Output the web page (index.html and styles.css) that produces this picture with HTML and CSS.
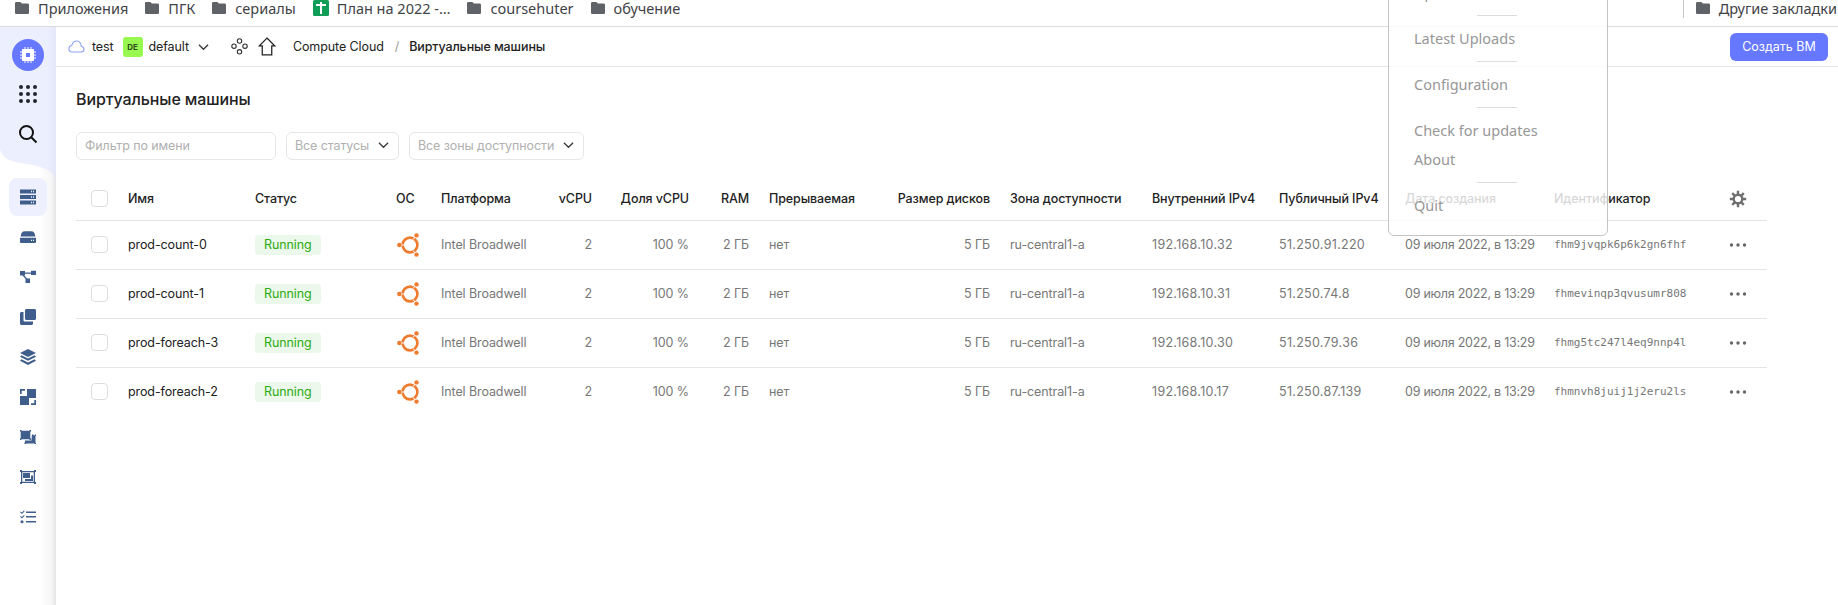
FILE: index.html
```html
<!DOCTYPE html>
<html lang="ru">
<head>
    <meta charset="UTF-8">
    <title>Виртуальные машины</title>
    <link rel="stylesheet" href="styles.css">
</head>
<body>
    <svg class="defs" width="0" height="0">
        <symbol id="folder" viewBox="0 0 14 12"><path d="M1.3 0H5.4L6.8 1.6H12.7C13.4 1.6 14 2.2 14 2.9V10.7C14 11.4 13.4 12 12.7 12H1.3C.6 12 0 11.4 0 10.7V1.3C0 .6 .6 0 1.3 0Z"/></symbol>
        <symbol id="chevron" viewBox="0 0 12 8"><path d="M1 1.5L6 6.5L11 1.5" fill="none" stroke="currentColor" stroke-width="1.3"/></symbol>
        <symbol id="dots" viewBox="0 0 18 4"><circle cx="2.500" cy="2" r="1.700"/><circle cx="9" cy="2" r="1.700"/><circle cx="15.500" cy="2" r="1.700"/></symbol>
        <symbol id="ubuntu" viewBox="0 0 24 24">
            <circle cx="14" cy="12" r="7.400" fill="none" stroke="#ee7b2e" stroke-width="2.600"/>
            <path d="M5 12H8.500M17.200 6.500L18.800 4M17.200 17.500L18.800 20" stroke="#fff" stroke-width="1"/>
            <circle cx="3.300" cy="12" r="2.200" fill="#ee7b2e"/>
            <circle cx="20.500" cy="2.400" r="2.200" fill="#ee7b2e"/>
            <circle cx="20.500" cy="21.600" r="2.200" fill="#ee7b2e"/>
        </symbol>
    </svg>

    <div class="bookmarks">
        <span class="bm"><svg class="bm-icon"><use href="#folder"/></svg>Приложения</span>
        <span class="bm"><svg class="bm-icon"><use href="#folder"/></svg>ПГК</span>
        <span class="bm"><svg class="bm-icon"><use href="#folder"/></svg>сериалы</span>
        <span class="bm"><svg class="bm-sheet" viewBox="0 0 16 16"><rect width="16" height="16" rx="1.5" fill="#0f9d58"/><path d="M3 5H13M8 2V14" stroke="#fff" stroke-width="2"/></svg>План на 2022 -…</span>
        <span class="bm"><svg class="bm-icon"><use href="#folder"/></svg>coursehuter</span>
        <span class="bm"><svg class="bm-icon"><use href="#folder"/></svg>обучение</span>
        <span class="bm bm-other"><svg class="bm-icon"><use href="#folder"/></svg>Другие закладки</span>
    </div>

    <div class="app">
        <aside class="sidebar">
            <div class="side-top">
                <span class="logo">
                    <svg width="18" height="18" viewBox="0 0 18 18"><path fill="#fff" fill-rule="evenodd" d="M4 3H14C14.600 3 15 3.400 15 4V14C15 14.600 14.600 15 14 15H4C3.400 15 3 14.600 3 14V4C3 3.400 3.400 3 4 3ZM7 7V11H11V7Z"/><path d="M6 1V3M9 1V3M12 1V3M6 15V17M9 15V17M12 15V17M1 6H3M1 9H3M1 12H3M15 6H17M15 9H17M15 12H17" stroke="#fff"/></svg>
                </span>
                <span class="side-btn">
                    <svg width="18" height="18" viewBox="0 0 18 18" fill="#22262e"><circle cx="2" cy="2" r="2"/><circle cx="9" cy="2" r="2"/><circle cx="16" cy="2" r="2"/><circle cx="2" cy="9" r="2"/><circle cx="9" cy="9" r="2"/><circle cx="16" cy="9" r="2"/><circle cx="2" cy="16" r="2"/><circle cx="9" cy="16" r="2"/><circle cx="16" cy="16" r="2"/></svg>
                </span>
                <span class="side-btn">
                    <svg width="20" height="20" viewBox="0 0 20 20" fill="none" stroke="#111" stroke-width="2"><circle cx="8.500" cy="8.500" r="6.500"/><path d="M13 13L18.500 18.500"/></svg>
                </span>
            </div>
            <nav class="side-nav">
                <span class="nav-item active">
                    <svg viewBox="0 0 16 16"><path fill-rule="evenodd" d="M0 .5H16V4.500H0ZM0 6H16V10H0ZM0 11.500H16V15.500H0ZM11 1.800V3.200H12V1.800ZM13 1.800V3.200H14V1.800ZM11 7.300V8.700H12V7.300ZM13 7.300V8.700H14V7.300ZM11 12.800V14.200H12V12.800ZM13 12.800V14.200H14V12.800Z"/></svg>
                </span>
                <span class="nav-item">
                    <svg viewBox="0 0 16 12"><path fill-rule="evenodd" d="M3 .5C4.500 0 11.500 0 13 .5C14.200 1 15 3 15.300 5.500H.7C1 3 1.800 1 3 .5ZM.5 6.800H15.500C16 6.800 16 7.300 16 7.800V10.500C16 11.500 15.500 12 14.500 12H1.500C.5 12 0 11.500 0 10.500V7.800C0 7.300 0 6.800 .5 6.800ZM11 8.800V10H12V8.800ZM13 8.800V10H14V8.800Z"/></svg>
                </span>
                <span class="nav-item">
                    <svg viewBox="0 0 16 14"><path d="M0 1H5V5.500H0ZM11 .8H16V5H11ZM5.500 8.500H10V13H5.500Z"/><path d="M4 3.200H12M3 5L7 9.500" stroke="#3f5e8c" stroke-width="1.200"/></svg>
                </span>
                <span class="nav-item">
                    <svg viewBox="0 0 16 16"><path d="M5 1.500C5 .7 5.700 0 6.500 0H14.500C15.300 0 16 .7 16 1.500V9.500C16 10.300 15.300 11 14.500 11H6.500C5.700 11 5 10.300 5 9.500Z"/><path d="M3.500 3V11.500C3.500 12 4 12.500 4.500 12.500H13V14.500C13 15.300 12.300 16 11.500 16H1.500C.7 16 0 15.300 0 14.500V4.500C0 3.700 .7 3 1.500 3Z"/></svg>
                </span>
                <span class="nav-item">
                    <svg viewBox="0 0 16 16"><path d="M8 0L16 4L8 8L0 4ZM1.500 6.300L8 9.600L14.500 6.300L16 7.800L8 11.800L0 7.800ZM1.500 10.300L8 13.500L14.500 10.300L16 11.800L8 16L0 11.800Z"/></svg>
                </span>
                <span class="nav-item">
                    <svg viewBox="0 0 16 16"><path d="M0 0H5V1.700H1.700V5H0ZM7 0H16V9H7ZM0 7H9V16H0ZM14.300 11H16V16H11V14.300H14.300Z"/></svg>
                </span>
                <span class="nav-item">
                    <svg viewBox="0 0 16 14"><path d="M0 0H1.500V.8H9.500V0H11V1.500H10.300V8.500H11V10H9.500V9.300H1.500V10H0V8.500H.7V1.500H0Z"/><path d="M12 4.500H13.500V5.200H15V4.500H16V6H15.500V13H16V14H14.500V13.500H6V14H4.500V12.500H5V10.500H11.500V9Z"/></svg>
                </span>
                <span class="nav-item">
                    <svg viewBox="0 0 16 14"><path fill-rule="evenodd" d="M0 0H2V1H14V0H16V2H15V12H16V14H14V13H2V14H0V12H1V2H0ZM2.300 2.300V11.700H13.700V2.300ZM3 3H10V8H3ZM11 5.500H13V11H5V9H11Z"/></svg>
                </span>
                <span class="nav-item">
                    <svg viewBox="0 0 16 13"><path d="M6 1H16V2.600H6ZM6 5.500H16V7.100H6ZM6 10.500H16V12.100H6Z"/><path d="M.5 1.300L2 2.800L4.300 .4M.5 5.800L2 7.300L4.300 4.900" fill="none" stroke="#3f5e8c" stroke-width="1.100"/><circle cx="2" cy="11.300" r="1.500"/></svg>
                </span>
            </nav>
        </aside>

        <main class="content">
            <header class="topbar">
                <svg class="cloud" width="17" height="13" viewBox="0 0 17 13" fill="none" stroke="#8ea4f0" stroke-width="1.100"><path d="M4 12H13C15 12 16 10.800 16 9.300C16 7.800 15 6.600 13.300 6.500C13 3.300 11 1 8.500 1C6 1 4.500 2.800 4 5.200C2.200 5.500 1 7 1 8.700C1 10.600 2.300 12 4 12Z"/></svg>
                <span class="cloud-name">test</span>
                <span class="folder-badge">DE</span>
                <span class="folder-name">default</span>
                <svg class="chev-sm"><use href="#chevron"/></svg>
                <svg class="nodes" width="17" height="17" viewBox="0 0 17 17" fill="none" stroke="#333" stroke-width="1.100"><circle cx="8.500" cy="3" r="2.200"/><circle cx="3" cy="8.200" r="2.200"/><circle cx="14" cy="8.200" r="2.200"/><circle cx="8.500" cy="13.800" r="2.200"/></svg>
                <svg class="home" width="18" height="19" viewBox="0 0 17 18" fill="none" stroke="#222" stroke-width="1.200"><path d="M8.500 1L16 8.500H13V17H4V8.500H1Z"/></svg>
                <span class="crumb">Compute Cloud</span>
                <span class="crumb-sep">/</span>
                <span class="crumb-current">Виртуальные машины</span>
                <button class="create-btn">Создать ВМ</button>
            </header>

            <section class="page">
                <h1 class="title">Виртуальные машины</h1>
                <div class="filters">
                    <span class="filter filter-name">Фильтр по имени</span>
                    <span class="filter filter-status">Все статусы<svg class="chev-sm"><use href="#chevron"/></svg></span>
                    <span class="filter filter-zone">Все зоны доступности<svg class="chev-sm"><use href="#chevron"/></svg></span>
                </div>

                <table class="vm-table">
                    <colgroup>
                        <col class="c-check"><col class="c-name"><col class="c-status"><col class="c-os">
                        <col class="c-platform"><col class="c-vcpu"><col class="c-share"><col class="c-ram">
                        <col class="c-preempt"><col class="c-disk"><col class="c-zone"><col class="c-ip">
                        <col class="c-pub"><col class="c-date"><col class="c-id"><col class="c-menu">
                    </colgroup>
                    <thead>
                        <tr>
                            <th class="pick"><span class="check"></span></th>
                            <th>Имя</th><th>Статус</th><th>ОС</th><th>Платформа</th>
                            <th class="num">vCPU</th><th class="num">Доля vCPU</th><th class="num">RAM</th>
                            <th>Прерываемая</th><th class="num">Размер дисков</th><th>Зона доступности</th>
                            <th>Внутренний IPv4</th><th>Публичный IPv4</th><th>Дата создания</th><th>Идентификатор</th>
                            <th class="menu">
                                <svg class="gear" width="18" height="18" viewBox="0 0 18 18" fill="none" stroke="#6f6f6f"><circle cx="9" cy="9" r="4.300" stroke-width="2.400"/><path d="M9 .8V4M9 14V17.200M.8 9H4M14 9H17.200M3.200 3.200L5.400 5.400M12.600 12.600L14.800 14.800M3.200 14.800L5.400 12.600M12.600 5.400L14.800 3.200" stroke-width="2.400"/></svg>
                            </th>
                        </tr>
                    </thead>
                    <tbody>
                        <tr>
                            <td class="pick"><span class="check"></span></td>
                            <td class="name">prod-count-0</td><td><span class="status">Running</span></td>
                            <td><svg class="os"><use href="#ubuntu"/></svg></td><td>Intel Broadwell</td>
                            <td class="num">2</td><td class="num">100 %</td><td class="num">2 ГБ</td><td>нет</td><td class="num">5 ГБ</td>
                            <td>ru-central1-a</td><td class="ip">192.168.10.32</td><td class="ip">51.250.91.220</td><td class="date">09 июля 2022, в 13:29</td>
                            <td class="mono">fhm9jvqpk6p6k2gn6fhf</td><td class="menu"><svg class="dots"><use href="#dots"/></svg></td>
                        </tr>
                        <tr>
                            <td class="pick"><span class="check"></span></td>
                            <td class="name">prod-count-1</td><td><span class="status">Running</span></td>
                            <td><svg class="os"><use href="#ubuntu"/></svg></td><td>Intel Broadwell</td>
                            <td class="num">2</td><td class="num">100 %</td><td class="num">2 ГБ</td><td>нет</td><td class="num">5 ГБ</td>
                            <td>ru-central1-a</td><td class="ip">192.168.10.31</td><td class="ip">51.250.74.8</td><td class="date">09 июля 2022, в 13:29</td>
                            <td class="mono">fhmevinqp3qvusumr808</td><td class="menu"><svg class="dots"><use href="#dots"/></svg></td>
                        </tr>
                        <tr>
                            <td class="pick"><span class="check"></span></td>
                            <td class="name">prod-foreach-3</td><td><span class="status">Running</span></td>
                            <td><svg class="os"><use href="#ubuntu"/></svg></td><td>Intel Broadwell</td>
                            <td class="num">2</td><td class="num">100 %</td><td class="num">2 ГБ</td><td>нет</td><td class="num">5 ГБ</td>
                            <td>ru-central1-a</td><td class="ip">192.168.10.30</td><td class="ip">51.250.79.36</td><td class="date">09 июля 2022, в 13:29</td>
                            <td class="mono">fhmg5tc247l4eq9nnp4l</td><td class="menu"><svg class="dots"><use href="#dots"/></svg></td>
                        </tr>
                        <tr>
                            <td class="pick"><span class="check"></span></td>
                            <td class="name">prod-foreach-2</td><td><span class="status">Running</span></td>
                            <td><svg class="os"><use href="#ubuntu"/></svg></td><td>Intel Broadwell</td>
                            <td class="num">2</td><td class="num">100 %</td><td class="num">2 ГБ</td><td>нет</td><td class="num">5 ГБ</td>
                            <td>ru-central1-a</td><td class="ip">192.168.10.17</td><td class="ip">51.250.87.139</td><td class="date">09 июля 2022, в 13:29</td>
                            <td class="mono">fhmnvh8juij1j2eru2ls</td><td class="menu"><svg class="dots"><use href="#dots"/></svg></td>
                        </tr>
                    </tbody>
                </table>
            </section>
        </main>
    </div>

    <div class="tray-menu">
        <div class="tray-item">Upload</div>
        <hr class="tray-sep">
        <div class="tray-item">Latest Uploads</div>
        <hr class="tray-sep">
        <div class="tray-item">Configuration</div>
        <hr class="tray-sep">
        <div class="tray-item">Check for updates</div>
        <div class="tray-item tray-close">About</div>
        <hr class="tray-sep">
        <div class="tray-item">Quit</div>
    </div>
</body>
</html>
```

FILE: styles.css
```css
* {
    box-sizing: border-box;
}

html, body {
    height: 100%;
}

body {
    margin: 0;
    background-color: #fff;
    color: #222;
    font-family: Inter, "Noto Sans", sans-serif;
    font-size: 12.500px;
    letter-spacing: -0.1px;
    overflow: hidden;
}

.defs {
    position: absolute;
}

/* закладки браузера */
.bookmarks {
    display: flex;
    align-items: center;
    gap: 17px;
    height: 27px;
    padding: 0 0 11px 15px;
    border-bottom: 1px solid #dcdcdc;
    font-family: "Noto Sans", sans-serif;
    font-size: 14.500px;
    letter-spacing: 0;
    color: #3f4347;
    white-space: nowrap;
}

.bm {
    display: flex;
    align-items: center;
    gap: 9px;
}

.bm-icon {
    width: 14px;
    height: 12px;
    fill: #5f6368;
}

.bm-sheet {
    width: 16px;
    height: 16px;
    margin-right: -1px;
}

.bm-other {
    margin-left: auto;
    padding-left: 12px;
    border-left: 1px solid #c8c8c8;
    margin-right: 1px;
}

.app {
    display: flex;
    height: calc(100% - 27px);
}

/* боковая панель */
.sidebar {
    width: 56px;
    flex-shrink: 0;
    background: linear-gradient(90deg, #fff 70%, #f6f6f6 92%, #e6e6e9 100%);
}

.side-top {
    display: flex;
    flex-direction: column;
    align-items: center;
    height: 151px;
    padding-top: 12px;
    background: linear-gradient(90deg, #eceffd 85%, #e4e7f8 100%);
    clip-path: path("M0 0H56V151C50 142 40 139 26 137C12 135 2 132 0 122Z");
}

.logo {
    display: flex;
    align-items: center;
    justify-content: center;
    width: 32px;
    height: 32px;
    border-radius: 50%;
    background-color: #6678ff;
}

.side-btn {
    display: flex;
    align-items: center;
    justify-content: center;
    height: 40px;
    margin-top: 3px;
}

.side-btn + .side-btn {
    margin-top: 0;
}

.side-nav {
    display: flex;
    flex-direction: column;
    align-items: center;
}

.nav-item {
    display: flex;
    align-items: center;
    justify-content: center;
    width: 38px;
    height: 38px;
    margin-bottom: 2px;
    border-radius: 8px;
}

.nav-item svg {
    width: 16px;
    height: 16px;
    fill: #3f5e8c;
}

.nav-item.active {
    background-color: #eef0ff;
}

/* верхняя панель */
.content {
    flex: 1;
    min-width: 0;
}

.topbar {
    display: flex;
    align-items: center;
    height: 40px;
    padding: 0 10px 0 12px;
    border-bottom: 1px solid #e5e5e5;
    white-space: nowrap;
}

.cloud-name {
    margin-left: 7px;
}

.folder-badge {
    display: flex;
    align-items: center;
    justify-content: center;
    width: 20px;
    height: 20px;
    margin-left: 9px;
    border-radius: 3px;
    background-color: #97f84f;
    font-size: 8px;
    font-weight: 700;
    color: #33491e;
}

.folder-name {
    margin-left: 6px;
}

.chev-sm {
    flex-shrink: 0;
    width: 11px;
    height: 8px;
    margin-left: 9px;
    color: #333;
}

.nodes {
    margin-left: 22px;
}

.home {
    margin-left: 10px;
}

.crumb {
    margin-left: 17px;
}

.crumb-sep {
    margin: 0 10px 0 11px;
    color: #999;
}

.crumb-current {
    font-weight: 500;
}

.create-btn {
    width: 98px;
    height: 28px;
    margin-left: auto;
    border: 0;
    border-radius: 6px;
    background-color: #6678ff;
    color: #fff;
    font-family: inherit;
    font-size: 12.500px;
}

/* страница */
.page {
    padding: 20px 71px 0 20px;
}

.title {
    margin: 0;
    font-size: 16px;
    line-height: 24px;
    font-weight: 500;
}

.filters {
    display: flex;
    gap: 10px;
    margin-top: 21px;
}

.filter {
    display: flex;
    align-items: center;
    justify-content: space-between;
    height: 28px;
    padding: 0 9px 2px 8px;
    border: 1px solid #e6e6e6;
    border-radius: 6px;
    color: #b0b0b0;
    white-space: nowrap;
}

.filter-name {
    width: 200px;
}

.filter-status {
    width: 113px;
}

.filter-zone {
    width: 175px;
}

/* таблица */
.vm-table {
    width: 1691px;
    margin-top: 18px;
    border-collapse: collapse;
    table-layout: fixed;
}

.vm-table th,
.vm-table td {
    height: 49px;
    padding: 0 10px;
    border-bottom: 1px solid #e5e5e5;
    text-align: left;
    color: #777;
    white-space: nowrap;
}

.vm-table th {
    height: 42px;
    font-weight: 500;
    color: #222;
}

.vm-table tbody tr:last-child td {
    border-bottom: 0;
}

.vm-table .pick {
    padding-left: 15px;
}

.vm-table .num {
    text-align: right;
}

.vm-table .name {
    color: #222;
}

.vm-table .ip {
    letter-spacing: 0.3px;
}

.vm-table .date {
    letter-spacing: -0.25px;
}

.vm-table .mono {
    font-family: "DejaVu Sans Mono", monospace;
    font-size: 11px;
    letter-spacing: 0;
}

.vm-table .menu {
    text-align: center;
}

.c-check { width: 42px; }
.c-name { width: 127px; }
.c-status { width: 141px; }
.c-os { width: 45px; }
.c-platform { width: 114px; }
.c-vcpu { width: 57px; }
.c-share { width: 97px; }
.c-ram { width: 60px; }
.c-preempt { width: 121px; }
.c-disk { width: 120px; }
.c-zone { width: 142px; }
.c-ip { width: 127px; }
.c-pub { width: 126px; }
.c-date { width: 149px; }
.c-id { width: 164px; }
.c-menu { width: 59px; }

.check {
    display: block;
    width: 17px;
    height: 17px;
    border: 1px solid #ddd;
    border-radius: 4px;
}

.status {
    display: inline-block;
    height: 20px;
    padding: 0 9px;
    border-radius: 4px;
    background-color: #ebf8eb;
    color: #2bab12;
    line-height: 20px;
}

.os {
    display: block;
    width: 24px;
    height: 24px;
}

.gear {
    display: block;
    margin: 0 auto;
}

.dots {
    display: block;
    width: 18px;
    height: 4px;
    margin: 0 auto;
    fill: #666;
}

/* меню поверх страницы */
.tray-menu {
    position: absolute;
    top: -19px;
    left: 1388px;
    width: 220px;
    height: 255px;
    padding-left: 25px;
    border: 1px solid #c4c4c4;
    border-radius: 6px;
    background-color: rgba(255, 255, 255, 0.82);
    color: #979797;
    font-family: "Noto Sans", sans-serif;
    font-size: 14.500px;
    letter-spacing: 0;
}

.tray-item {
    height: 21px;
    line-height: 21px;
}

.tray-close {
    margin-top: 8px;
}

.tray-sep {
    width: 40px;
    height: 1px;
    margin: 12px 0 12px 63px;
    border: 0;
    background-color: #ddd;
}
```
